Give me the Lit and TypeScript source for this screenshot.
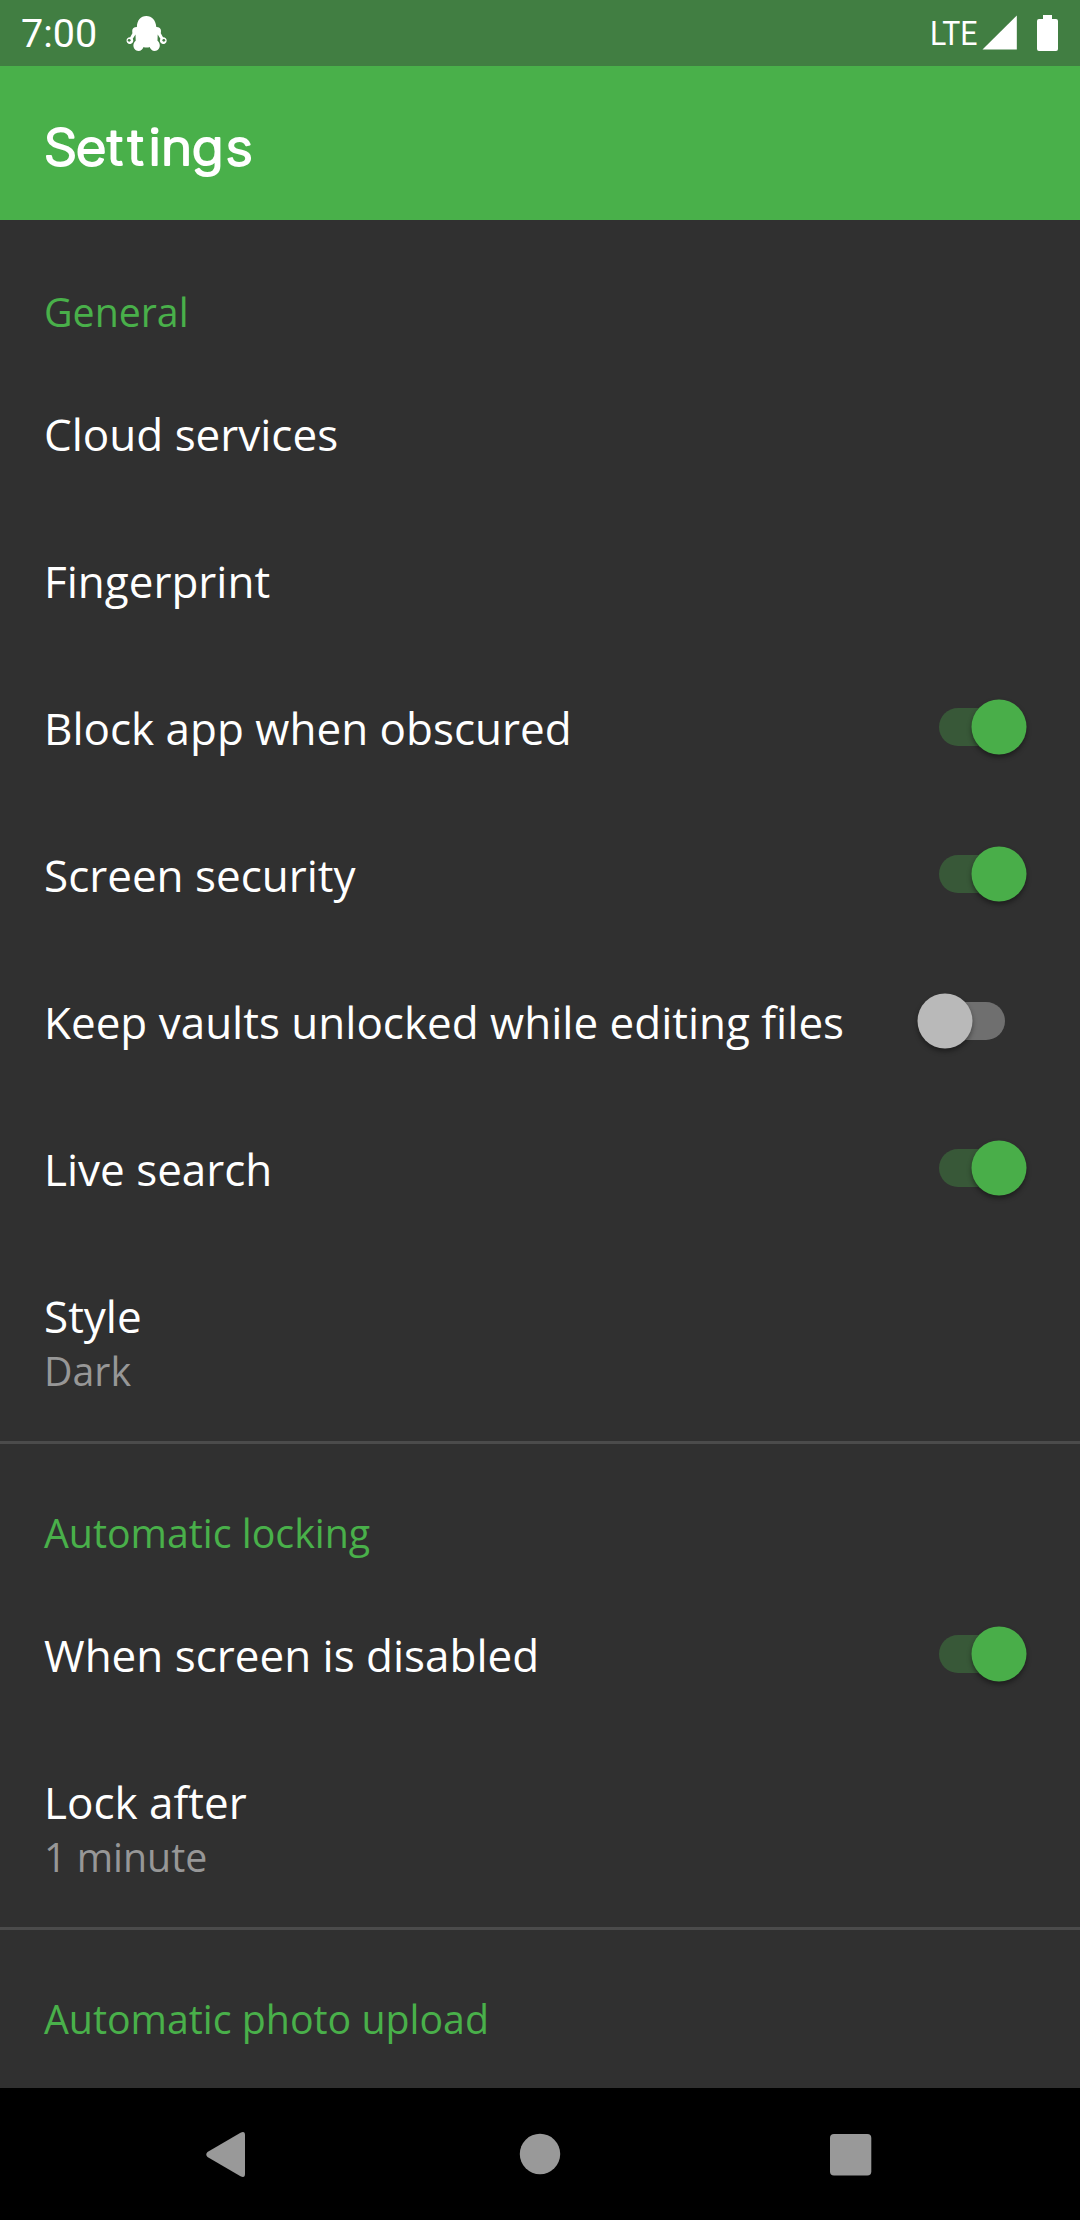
import { LitElement, html, css, svg, nothing } from "lit";
import { customElement, property } from "lit/decorators.js";

interface Item {
  title: string;
  summary?: string;
  on?: boolean;
}

interface Section {
  heading: string;
  items: Item[];
}

const SECTIONS: Section[] = [
  {
    heading: "General",
    items: [
      { title: "Cloud services" },
      { title: "Fingerprint" },
      { title: "Block app when obscured", on: true },
      { title: "Screen security", on: true },
      { title: "Keep vaults unlocked while editing files", on: false },
      { title: "Live search", on: true },
      { title: "Style", summary: "Dark" },
    ],
  },
  {
    heading: "Automatic locking",
    items: [
      { title: "When screen is disabled", on: true },
      { title: "Lock after", summary: "1 minute" },
    ],
  },
  { heading: "Automatic photo upload", items: [] },
];

@customElement("status-bar")
export class StatusBar extends LitElement {
  static styles = css`
    :host {
      display: flex;
      align-items: center;
      height: 66px;
      flex: none;
      background: #417e42;
      color: #fff;
      font-family: Roboto, sans-serif;
    }
    .clock {
      font-size: 39.5px;
      line-height: 66px;
      padding: 2px 0 0 21px;
      width: 104px;
      box-sizing: border-box;
    }
    .bot {
      display: block;
    }
    .right {
      margin-left: auto;
      display: block;
    }
    .lte {
      font-family: Roboto, sans-serif;
      font-size: 33.5px;
    }
  `;

  render() {
    return html`
      <div class="clock">7:00</div>
      <svg class="bot" width="84" height="66" viewBox="104 0 84 66" fill="#fff">
        <path d="M146.300 16c5.700 0 9.500 4.300 10 11 3 .2 4.700 1.400 4.700 4l-.2 2.200 2.200 4a3.400 3.400 0 1 1-2.600 1.600l-2.700-4.400-.2 6.400c1.600 1.300 2.300 2.900 2.300 4.800 0 3-2.100 5.400-5 5.400-2.800 0-4.200-1.800-5.200-4-1.200.7-4.800.7-6 0-1 2.200-2.400 4-5.200 4-2.900 0-5-2.400-5-5.400 0-1.900.7-3.500 2.300-4.800l-.2-6.400-2.700 4.400a3.400 3.400 0 1 1-2.600-1.600l2.200-4-.2-2.200c0-2.600 1.700-3.800 4.700-4C137.100 20.300 140.600 16 146.300 16Z" />
        <circle cx="129.200" cy="40.300" r="1.400" fill="#417e42" />
        <circle cx="163.800" cy="40.300" r="1.400" fill="#417e42" />
      </svg>
      <svg class="right" width="160" height="66" viewBox="920 0 160 66" fill="#fff">
        <text class="lte" x="930" y="44.500" textLength="47.500" lengthAdjust="spacingAndGlyphs">LTE</text>
        <path d="M982.500 49.500 1016.800 15.500V49.500Z" />
        <path d="M1043 15h9v4h4q2 0 2 2v28q0 2-2 2h-17q-2 0-2-2V21q0-2 2-2h4Z" />
      </svg>
    `;
  }
}

@customElement("toggle-switch")
export class ToggleSwitch extends LitElement {
  @property({ type: Boolean }) on = false;

  static styles = css`
    :host {
      display: block;
      flex: none;
    }
    .switch {
      display: block;
      overflow: visible;
    }
    .thumb {
      filter: drop-shadow(0 3px 2.5px rgba(0, 0, 0, 0.4));
    }
  `;

  render() {
    return html`<svg class="switch" width="110" height="66" viewBox="917 0 110 66">
      ${this.on
        ? svg`<rect x="939" y="14" width="76" height="38" rx="19" fill="#385838" />
            <circle class="thumb" cx="999" cy="33" r="27.500" fill="#49ae49" />`
        : svg`<rect x="929" y="14" width="76" height="38" rx="19" fill="#6f6f6f" />
            <circle class="thumb" cx="945" cy="33" r="27.500" fill="#b9b9b9" />`}
    </svg>`;
  }
}

@customElement("settings-section")
export class SettingsSection extends LitElement {
  @property({ attribute: false }) section!: Section;
  @property({ type: Boolean }) divided = false;

  static styles = css`
    :host {
      display: block;
    }
    .heading {
      box-sizing: border-box;
      height: 141px;
      border-top: 3px solid transparent;
      padding: 63px 44px 0;
      font-size: 39.3px;
      line-height: 52px;
      color: #49b04a;
    }
    .divided {
      border-top-color: #4b4b4b;
    }
    .row {
      box-sizing: border-box;
      height: 147px;
      padding: 0 53px 3px 44px;
      display: flex;
      align-items: center;
      justify-content: space-between;
    }
    .title {
      padding-top: 2px;
      font-size: 44px;
      line-height: 60px;
      color: #fff;
    }
    .tall {
      height: 198px;
      padding-bottom: 0;
    }
    .tall .title {
      padding-top: 0;
    }
    .summary {
      font-size: 39.3px;
      line-height: 50px;
      padding-bottom: 2px;
      color: #979797;
    }
  `;

  render() {
    return html`
      <div class="heading ${this.divided ? "divided" : ""}">${this.section.heading}</div>
      ${this.section.items.map(
        (item) => html`
          <div class="row ${item.summary ? "tall" : ""}">
            <div>
              <div class="title">${item.title}</div>
              ${item.summary ? html`<div class="summary">${item.summary}</div>` : nothing}
            </div>
            ${item.on === undefined
              ? nothing
              : html`<toggle-switch ?on=${item.on}></toggle-switch>`}
          </div>
        `
      )}
    `;
  }
}

@customElement("app-root")
export class AppRoot extends LitElement {
  static styles = css`
    :host {
      display: flex;
      flex-direction: column;
      width: 1080px;
      height: 2220px;
      overflow: hidden;
      background: #303030;
      font-family: "Open Sans", sans-serif;
    }
    .toolbar {
      flex: none;
      height: 154px;
      background: #49b04a;
    }
    .heading {
      display: block;
    }
    .heading-text {
      font-family: Inter, sans-serif;
      font-weight: 300;
      font-size: 50px;
      fill: #fff;
      stroke: #fff;
      stroke-width: 2.1px;
      stroke-linejoin: round;
    }
    .content {
      flex: 1;
      min-height: 0;
      overflow: hidden;
    }
    .navbar {
      flex: none;
      height: 132px;
      background: #000;
    }
    .keys {
      display: block;
    }
  `;

  render() {
    return html`
      <status-bar></status-bar>
      <div class="toolbar">
        <svg class="heading" width="1080" height="154">
          <text class="heading-text" transform="scale(1.06 1)" x="41.300 71.500 101 120.500 140 152 181 212.700" y="99.500">Settings</text>
        </svg>
      </div>
      <div class="content">
        ${SECTIONS.map(
          (s, i) => html`<settings-section .section=${s} ?divided=${i > 0}></settings-section>`
        )}
      </div>
      <div class="navbar">
        <svg class="keys" width="1080" height="132" fill="#999">
          <path d="M207.500 64 240.500 44.800Q245 42.700 245 47V86Q245 90.300 240.500 88.200L207.500 69Q205 66.500 207.500 64Z" />
          <circle cx="540" cy="66" r="20.200" />
          <rect x="830" y="46" width="41.300" height="41.500" rx="4" />
        </svg>
      </div>
    `;
  }
}
